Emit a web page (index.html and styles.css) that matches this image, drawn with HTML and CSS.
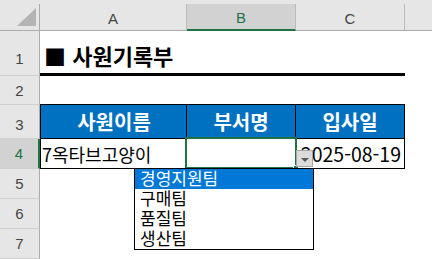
FILE: index.html
```html
<!DOCTYPE html>
<html lang="ko">
<head>
    <meta charset="UTF-8">
    <meta name="viewport" content="width=device-width, initial-scale=1.0">
    <title>사원기록부</title>
    <link rel="stylesheet" href="styles.css">
</head>
<body>
    <div class="strip"></div>

    <div class="sheet">
        <div class="row col-head">
            <div class="rh corner">
                <svg width="39" height="26" viewBox="0 0 39 26"><polygon points="17,22 36,22 36,4" fill="#b4b4b4"/></svg>
            </div>
            <div class="ch col-a">A</div>
            <div class="ch col-b active">B</div>
            <div class="ch col-c">C</div>
            <div class="ch col-rest"></div>
        </div>

        <div class="row r1">
            <div class="rh">1</div>
            <div class="cell col-a title underline">■ 사원기록부</div>
            <div class="cell col-b underline"></div>
            <div class="cell col-c underline"></div>
            <div class="cell col-rest"></div>
        </div>

        <div class="row r2">
            <div class="rh">2</div>
            <div class="cell col-a table-top"></div>
            <div class="cell col-b table-top"></div>
            <div class="cell col-c table-top"></div>
            <div class="cell col-rest"></div>
        </div>

        <div class="row r3">
            <div class="rh">3</div>
            <div class="cell col-a boxed head first">사원이름</div>
            <div class="cell col-b boxed head">부서명</div>
            <div class="cell col-c boxed head">입사일</div>
            <div class="cell col-rest"></div>
        </div>

        <div class="row r4">
            <div class="rh active">4</div>
            <div class="cell col-a boxed first">7옥타브고양이</div>
            <div class="cell col-b boxed"></div>
            <div class="cell col-c boxed date">2025-08-19</div>
            <div class="cell col-rest"></div>
        </div>

        <div class="row">
            <div class="rh">5</div>
        </div>
        <div class="row">
            <div class="rh">6</div>
        </div>
        <div class="row">
            <div class="rh">7</div>
        </div>

        <!-- selected cell B4 -->
        <div class="selection"><span class="fill-handle"></span></div>

        <!-- data validation dropdown -->
        <div class="drop-btn"><span class="arrow"></span></div>
        <ul class="drop-list">
            <li class="picked">경영지원팀</li>
            <li>구매팀</li>
            <li>품질팀</li>
            <li>생산팀</li>
        </ul>
    </div>
</body>
</html>
```

FILE: styles.css
```css
* {
    margin: 0;
    padding: 0;
    box-sizing: border-box;
}

body {
    width: 432px;
    height: 259px;
    overflow: hidden;
    background: #fff;
    font-family: "Noto Sans CJK KR", "Noto Sans", sans-serif;
    color: #000;
}

.strip {
    height: 4px;
    background: #e6e6e6;
}

.sheet {
    position: relative;
}

.row {
    display: flex;
    height: 30px;
}

.col-head { height: 27px; }
.r1 { height: 45px; }
.r2 { height: 29px; }
.r3 { height: 34px; }

/* row headers */
.rh {
    width: 40px;
    flex: none;
    background: #e6e6e6;
    border-right: 1px solid #ababab;
    border-bottom: 1px solid #cfcfcf;
    display: flex;
    align-items: center;
    justify-content: center;
    font: 15px/17px "Liberation Sans", Arial, sans-serif;
    color: #444;
}

.r1 .rh { padding-top: 10px; }
.r3 .rh { padding-top: 6px; }

.rh.active {
    background: #d2d2d2;
    color: #217346;
    border-right: 2px solid #217346;
}

.corner {
    display: block;
    border-bottom-color: #ababab;
}

.corner svg { display: block; }

/* column headers */
.ch {
    background: #e6e6e6;
    border-right: 1px solid #bcbcbc;
    border-bottom: 1px solid #ababab;
    display: flex;
    align-items: center;
    justify-content: center;
    padding-top: 2px;
    font: 15px/17px "Liberation Sans", Arial, sans-serif;
    color: #444;
}

.ch.active {
    background: #d2d2d2;
    color: #217346;
    border-bottom: 2px solid #217346;
}

.col-a { width: 147px; flex: none; }
.col-b { width: 109px; flex: none; }
.col-c { width: 109px; flex: none; }
.col-rest { flex: 1; }

.ch.col-rest { border-right: none; }

/* cells */
.cell {
    display: flex;
    align-items: center;
    font-size: 18px;
    line-height: 22px;
    white-space: nowrap;
}

.title {
    align-items: flex-end;
    padding: 0 0 5px 4px;
    font-size: 22px;
    line-height: 26px;
    font-weight: bold;
}

.underline { border-bottom: 3px solid #000; }

.table-top { border-bottom: 1px solid #000; }

.boxed {
    border-right: 1px solid #000;
    border-bottom: 1px solid #000;
}

.boxed.first { border-left: 1px solid #000; padding-left: 1px; }

.head {
    background: #0070c0;
    color: #fff;
    font-size: 20px;
    font-weight: bold;
    justify-content: center;
}

.date {
    justify-content: flex-end;
    padding-right: 3px;
    font-size: 19.5px;
}

/* selection outline on B4 */
.selection {
    position: absolute;
    left: 185px;
    top: 133px;
    width: 112px;
    height: 32px;
    border: 2px solid #217346;
}

.fill-handle {
    position: absolute;
    right: -4px;
    bottom: -4px;
    width: 6px;
    height: 6px;
    background: #217346;
    border: 1px solid #fff;
}

.drop-btn {
    position: absolute;
    left: 296px;
    top: 146px;
    width: 17px;
    height: 17px;
    background: #dcdcdc;
    border: 1px solid #a6a6a6;
    display: flex;
    align-items: center;
    justify-content: center;
}

.arrow {
    width: 0;
    height: 0;
    border-left: 4px solid transparent;
    border-right: 4px solid transparent;
    border-top: 4px solid #595959;
    margin-top: 2px;
}

.drop-list {
    position: absolute;
    left: 134px;
    top: 164px;
    width: 180px;
    height: 82px;
    list-style: none;
    background: #fff;
    border: 1px solid #000;
}

.drop-list li {
    height: 20px;
    line-height: 19px;
    padding: 1px 0 0 5px;
    font-family: "Liberation Sans", "Noto Sans CJK KR", sans-serif;
    font-size: 17px;
    white-space: nowrap;
}

.drop-list li.picked {
    background: #0078d7;
    color: #fff;
}
```
